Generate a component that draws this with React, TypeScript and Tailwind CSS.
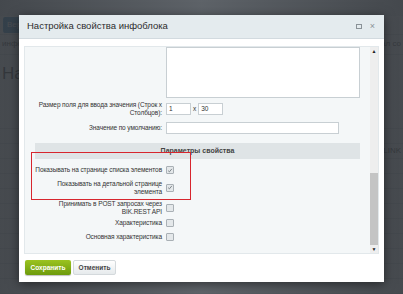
import React from "react";

const font = { fontFamily: '"Liberation Sans", Arial, sans-serif' };

function Box({ checked }: { checked?: boolean }) {
  return (
    <span className="flex h-[8px] w-[8px] shrink-0 items-center justify-center rounded-[1px] border border-[#a9b0b5] bg-[#e4e8ea]">
      {checked && (
        <svg viewBox="0 0 8 8" className="h-[7px] w-[7px]">
          <path d="M1.5 4.2 L3.2 5.8 L6.5 1.8" fill="none" stroke="#6b7378" strokeWidth="1.1" />
        </svg>
      )}
    </span>
  );
}

function CheckRow({ label, checked, className }: { label: React.ReactNode; checked?: boolean; className: string }) {
  return (
    <div className={"grid min-h-[9px] grid-cols-[127px_1fr] items-center gap-x-[4px] " + className}>
      <div className="whitespace-nowrap text-right text-[6.5px] leading-[7.5px] tracking-[-0.1px] text-[#333]">{label}</div>
      <Box checked={checked} />
    </div>
  );
}

export default function App() {
  return (
    <div className="relative h-[294px] w-[403px] overflow-hidden bg-[#eef1f3]" style={font}>
      {/* page behind */}
      <div className="flex h-full flex-col">
        <div className="h-[22px] bg-[#dfe4e7]" />
        <div className="flex h-[24px] items-center px-[3px]">
          <span className="rounded-[2px] bg-[#3f8fc5] px-[4px] py-[2px] text-[8px] text-white">Вернуть</span>
        </div>
        <div className="flex h-[28px] items-center justify-between border-y border-[#cfd6da] px-[2px] text-[8px] text-[#444]">
          <span>инфоблок</span>
          <span>журнал со</span>
        </div>
        <div className="px-[2px] pt-[6px] text-[17px] text-[#333]">Настройки</div>
        <div className="mt-[28px] flex flex-col">
          {Array.from({ length: 12 }).map((_, i) => (
            <div key={i} className="flex h-[15px] items-center justify-end border-b border-[#cfd6da] pr-[2px] text-[8px] text-[#444]">
              {i === 2 ? "LINK" : ""}
            </div>
          ))}
        </div>
      </div>
      <div className="absolute inset-0 bg-gradient-to-r from-[#33373c]/90 via-[#474c52]/85 to-[#33373c]/90" />

      {/* dialog */}
      <div className="absolute left-[19px] top-[15px] flex w-[365px] flex-col bg-white shadow-[0_2px_10px_rgba(0,0,0,0.5)]">
        <div className="flex h-[24px] items-center justify-between border-b border-[#d2dadf] bg-[#e4ebee] pl-[8px] pr-[9px]">
          <span className="text-[9.5px] text-[#2c2c2c]">Настройка свойства инфоблока</span>
          <div className="flex items-center gap-[8px] text-[#8a9297]">
            <span className="block h-[5px] w-[6px] border border-[#8a9297]" />
            <span className="text-[9px] leading-none">×</span>
          </div>
        </div>

        <div className="px-[5px] pt-[7px]">
          <div className="flex h-[208px] border border-[#e2e8eb] bg-[#f4f7f8]">
            <div className="relative flex-1 overflow-hidden pl-[10px] pr-[10px]">
              <div className="grid grid-cols-[127px_1fr] gap-x-[4px]">
                <div />
                <div className="h-[51px] border border-[#c8cfd3] bg-white" />
              </div>

              <div className="mt-[3px] grid grid-cols-[127px_1fr] items-center gap-x-[4px]">
                <div className="text-right text-[6.5px] leading-[7.5px] tracking-[-0.1px] text-[#333]">
                  Размер поля для ввода значения (Строк x<br />Столбцов):
                </div>
                <div className="flex items-center gap-[2px] text-[6.5px] text-[#333]">
                  <span className="flex h-[12px] w-[25px] items-center border border-[#c8cfd3] bg-white px-[2px]">1</span>
                  <span>x</span>
                  <span className="flex h-[12px] w-[25px] items-center border border-[#c8cfd3] bg-white px-[2px]">30</span>
                </div>
              </div>

              <div className="mt-[6px] grid grid-cols-[127px_1fr] items-center gap-x-[4px]">
                <div className="text-right text-[6.5px] tracking-[-0.1px] text-[#333]">Значение по умолчанию:</div>
                <div className="h-[12px] w-[173px] border border-[#c8cfd3] bg-white" />
              </div>

              <div className="mt-[9px] flex h-[16px] items-center justify-center bg-[#dfe4e6] text-[7px] font-bold text-[#444]">
                Параметры свойства
              </div>

              <div className="flex flex-col">
                <CheckRow className="mt-[6.5px]" label="Показывать на странице списка элементов" checked />
                <CheckRow className="mt-[5.5px]" label={<>Показывать на детальной странице<br />элемента</>} checked />
                <CheckRow className="mt-[5px]" label={<>Принимать в POST запросах через<br />BIK.REST API</>} />
                <CheckRow className="mt-[3.5px]" label="Характеристика" />
                <CheckRow className="mt-[5px]" label="Основная характеристика" />
              </div>

              <div className="pointer-events-none absolute left-[6px] top-[105px] h-[48px] w-[160px] border-[1.5px] border-[#d7262e]" />
            </div>

            <div className="flex w-[8px] flex-col bg-[#eeeeee]">
              <div className="flex h-[8px] items-center justify-center text-[5px] leading-none text-[#222]">▲</div>
              <div className="flex-1 pt-[118px]">
                <div className="h-full bg-[#c4c4c4]" />
              </div>
              <div className="flex h-[8px] items-center justify-center text-[5px] leading-none text-[#222]">▼</div>
            </div>
          </div>
        </div>

        <div className="flex items-center gap-[2px] px-[6px] pb-[7px] pt-[6px]">
          <span className="flex h-[15px] w-[46px] items-center justify-center rounded-[2px] bg-gradient-to-b from-[#9bc320] to-[#6d9b0c] text-[6.5px] font-bold text-white shadow-[0_1px_1px_rgba(0,0,0,0.25)]">
            Сохранить
          </span>
          <span className="flex h-[15px] w-[43px] items-center justify-center rounded-[2px] border border-[#d4d9dc] bg-gradient-to-b from-white to-[#e6eaec] text-[6.5px] font-bold text-[#444]">
            Отменить
          </span>
        </div>
      </div>
    </div>
  );
}
